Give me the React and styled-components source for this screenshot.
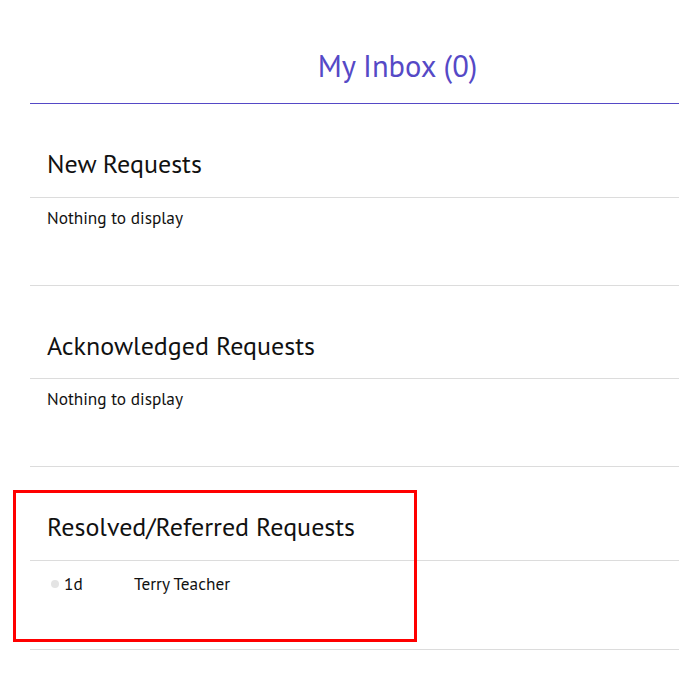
import React from "react";
import styled, { createGlobalStyle } from "styled-components";

const Global = createGlobalStyle`
  html, body { margin: 0; padding: 0; background: #fff; overflow: hidden; }
  body { font-family: "PT Sans", Lato, "Liberation Sans", sans-serif; color: #1a1a1a; }
`;

const Page = styled.div`
  position: relative;
  width: 679px;
  height: 692px;
  padding-left: 30px;
  box-sizing: border-box;
`;

const Header = styled.header`
  border-bottom: 1px solid #5549c6;
  padding: 46px 0 17px 86px;
  text-align: center;
`;

const Title = styled.h1`
  margin: 0;
  font-size: 30.5px;
  line-height: 40px;
  font-weight: 400;
  color: #5549c6;
`;

const Section = styled.section`
  border-bottom: 1px solid #dcdcdc;
`;

const SectionTitle = styled.h2`
  margin: 0;
  padding: 44px 0 16.5px 17px;
  font-size: 26px;
  line-height: 32px;
  font-weight: 400;
  color: #111;
  border-bottom: 1px solid #dcdcdc;
`;

const SectionBody = styled.div`
  padding: 10px 17px 0;
  height: ${(p) => p.$h || 87}px;
  box-sizing: border-box;
  font-size: 17.3px;
  line-height: 20px;
  color: #111;
`;

const Row = styled.div`
  display: flex;
  align-items: center;
  padding: 3px 0 0 4px;
`;

const Dot = styled.span`
  width: 8px;
  height: 8px;
  border-radius: 50%;
  background: #e4e4e4;
  margin-right: 5px;
  flex: none;
`;

const Age = styled.span`
  width: 70px;
  flex: none;
`;

const Name = styled.span``;

const Highlight = styled.div`
  position: absolute;
  left: 13px;
  top: 490px;
  width: 404px;
  height: 152px;
  box-sizing: border-box;
  border: 3px solid #ff0000;
  pointer-events: none;
`;

export default function App() {
  return (
    <>
      <Global />
      <Page>
        <Header>
          <Title>My Inbox (0)</Title>
        </Header>
        <Section>
          <SectionTitle>New Requests</SectionTitle>
          <SectionBody>Nothing to display</SectionBody>
        </Section>
        <Section>
          <SectionTitle>Acknowledged Requests</SectionTitle>
          <SectionBody>Nothing to display</SectionBody>
        </Section>
        <Section>
          <SectionTitle>Resolved/Referred Requests</SectionTitle>
          <SectionBody $h={88}>
            <Row>
              <Dot />
              <Age>1d</Age>
              <Name>Terry Teacher</Name>
            </Row>
          </SectionBody>
        </Section>
        <Highlight />
      </Page>
    </>
  );
}
